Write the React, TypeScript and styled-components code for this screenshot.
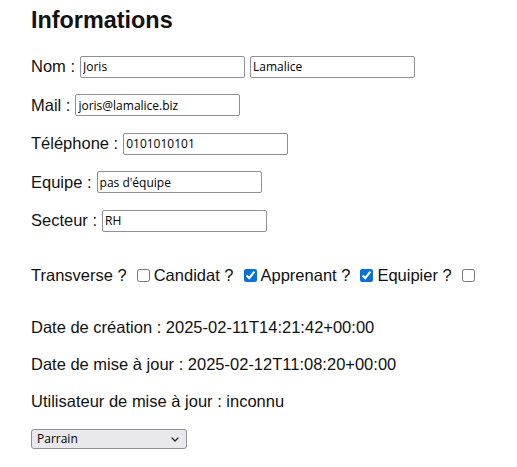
import React from "react";
import styled, { createGlobalStyle } from "styled-components";

const GlobalStyle = createGlobalStyle`
  html, body {
    margin: 0;
    padding: 0;
    background: #ffffff;
  }
  body {
    font-family: "Liberation Sans", Arial, sans-serif;
    color: #111111;
  }
`;

const Page = styled.div`
  padding: 6px 0 16px 31px;
`;

const Title = styled.h2`
  margin: 0;
  font-size: 23.4px;
  line-height: 28px;
  font-weight: 700;
  color: #111111;
`;

const Fields = styled.div`
  display: flex;
  flex-direction: column;
  gap: 16.5px;
  margin-top: 21.5px;
`;

const Field = styled.div`
  display: flex;
  align-items: center;
  gap: 5px;
  height: 22px;
  font-size: 16.5px;
  white-space: nowrap;
`;

const TextInput = styled.input`
  box-sizing: border-box;
  width: 165px;
  height: 22px;
  margin: 0;
  padding: 0 2px;
  border: 1px solid #8f8f9d;
  border-radius: 2px;
  background: #ffffff;
  font-family: "Open Sans", "Noto Sans", sans-serif;
  font-size: 12px;
  color: #000000;
  outline: none;
`;

const CheckRow = styled.div`
  display: flex;
  align-items: center;
  height: 20px;
  line-height: 20px;
  margin-top: 33px;
  font-size: 16.5px;
  white-space: nowrap;
`;

const Check = styled.input.attrs({ type: "checkbox" })`
  width: 13px;
  height: 13px;
  margin: 1px 4px 0 10px;
  accent-color: #0a72d6;
`;

const InfoLine = styled.p<{ $first?: boolean }>`
  margin: ${(p) => (p.$first ? "32.5px" : "17px")} 0 0;
  font-size: 16.5px;
  line-height: 20px;
  white-space: nowrap;
`;

const SelectWrap = styled.div`
  position: relative;
  display: inline-flex;
  margin-top: 17.5px;
`;

const Select = styled.select`
  appearance: none;
  -webkit-appearance: none;
  box-sizing: border-box;
  width: 156px;
  height: 20px;
  margin: 0;
  padding: 0 20px 0 5px;
  border: 1px solid #8f8f9d;
  border-radius: 3px;
  background: #e9e9ed;
  font-family: "Open Sans", "Noto Sans", sans-serif;
  font-size: 12px;
  color: #000000;
  outline: none;
`;

const Chevron = styled.svg`
  position: absolute;
  right: 8px;
  top: 8px;
  width: 8px;
  height: 5px;
  pointer-events: none;
`;

export default function App() {
  return (
    <>
      <GlobalStyle />
      <Page>
        <Title>Informations</Title>
        <Fields>
          <Field>
            Nom :
            <TextInput defaultValue="Joris" />
            <TextInput defaultValue="Lamalice" />
          </Field>
          <Field>
            Mail :
            <TextInput defaultValue="joris@lamalice.biz" />
          </Field>
          <Field>
            Téléphone :
            <TextInput defaultValue="0101010101" />
          </Field>
          <Field>
            Equipe :
            <TextInput defaultValue="pas d'équipe" />
          </Field>
          <Field>
            Secteur :
            <TextInput defaultValue="RH" />
          </Field>
        </Fields>
        <CheckRow>
          Transverse ?
          <Check />
          Candidat ?
          <Check defaultChecked />
          Apprenant ?
          <Check defaultChecked />
          Equipier ?
          <Check />
        </CheckRow>
        <InfoLine $first>Date de création : 2025-02-11T14:21:42+00:00</InfoLine>
        <InfoLine>Date de mise à jour : 2025-02-12T11:08:20+00:00</InfoLine>
        <InfoLine>Utilisateur de mise à jour : inconnu</InfoLine>
        <SelectWrap>
          <Select defaultValue="Parrain">
            <option value="Parrain">Parrain</option>
          </Select>
          <Chevron viewBox="0 0 8 5" fill="none">
            <path d="M1 1 L4 4 L7 1" stroke="#222" strokeWidth="1.3" strokeLinecap="round" strokeLinejoin="round" />
          </Chevron>
        </SelectWrap>
      </Page>
    </>
  );
}
